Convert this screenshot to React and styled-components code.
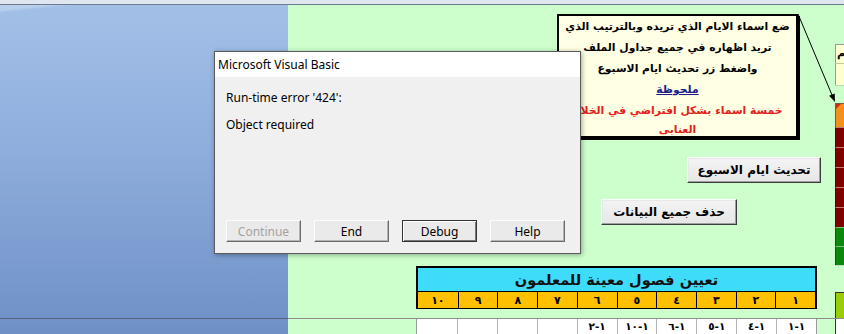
import React from 'react'
import styled, { createGlobalStyle } from 'styled-components'

const GlobalStyle = createGlobalStyle`
  html, body {
    margin: 0;
    padding: 0;
  }
  body {
    width: 844px;
    height: 334px;
    overflow: hidden;
    background: #ccffcc;
  }
`

const Screen = styled.div`
  position: relative;
  width: 844px;
  height: 334px;
  display: flex;
  flex-direction: column;
  overflow: hidden;
`

const TopStrip = styled.div`
  height: 4px;
  background: #dfe6ef;
  border-bottom: 1px solid #6b7a8d;
`

const Body = styled.div`
  flex: 1;
  display: flex;
`

const SidePanel = styled.div`
  width: 288px;
  background:
    linear-gradient(174deg, rgba(255, 255, 255, 0.25) 0 5px, rgba(255, 255, 255, 0) 8px) 0 0 / 100px 20px no-repeat,
    linear-gradient(180deg, #a2c0e7 0%, #8eaddc 45%, #6e90c6 100%);
`

const PanelRule = styled.div`
  margin-top: 313px;
  height: 1px;
  background: #56657c;
`

const Sheet = styled.div`
  flex: 1;
  display: flex;
  flex-direction: column;
  background: #ccffcc;
  font-family: "DejaVu Sans", sans-serif;
`

const SheetUpper = styled.div`
  height: 313px;
  display: flex;
`

const Canvas = styled.div`
  width: 547px;
  display: flex;
  flex-direction: column;
  align-items: flex-start;
`

const NoteBox = styled.div`
  margin: 9px 0 0 269px;
  width: 241px;
  height: 124px;
  box-sizing: border-box;
  border: 2px solid #000;
  box-shadow: 2px 2px 0 #000;
  background: #ffffe3;
  direction: rtl;
  text-align: center;
  font-weight: bold;
  font-size: 10.8px;
`

const NoteLine = styled.div`
  color: ${p => p.$color || '#000'};
  white-space: nowrap;
  text-decoration: ${p => (p.$underline ? 'underline' : 'none')};
  line-height: ${p => p.$lh || 21}px;
`

const SheetButton = styled.div`
  margin: ${p => p.$top}px 0 0 ${p => p.$left}px;
  width: ${p => p.$width}px;
  height: 26px;
  box-sizing: border-box;
  display: flex;
  align-items: center;
  justify-content: center;
  direction: rtl;
  font-weight: bold;
  font-size: 12px;
  color: #000;
  background: linear-gradient(180deg, #f4f4f4, #e6e6e6);
  border: 1px solid;
  border-color: #ffffff #3c3c3c #3c3c3c #ffffff;
  box-shadow: inset -1px -1px 0 #a0a0a0, inset 1px 1px 0 #e8e8e8;
`

const TableBlock = styled.div`
  margin: 41px 0 0 128px;
  width: 401px;
  box-sizing: border-box;
  border: 2px solid #000;
  border-bottom-width: 1px;
  direction: rtl;
`

const TableTitle = styled.div`
  height: 23px;
  background: #3fdcf9;
  border-bottom: 1px solid #000;
  display: flex;
  align-items: center;
  justify-content: center;
  font-weight: bold;
  font-size: 14.5px;
  color: #111;
`

const NumberRow = styled.div`
  height: 16px;
  display: grid;
  grid-template-columns: repeat(10, 1fr);
  background: #ffc000;
`

const NumberCell = styled.div`
  display: flex;
  align-items: center;
  justify-content: center;
  font-weight: bold;
  font-size: 11px;
  border-left: ${p => (p.$last ? 'none' : '1px solid #000')};
`

const RightColumn = styled.div`
  width: 9px;
  display: flex;
  flex-direction: column;
  overflow: hidden;
`

const ColumnCell = styled.div`
  position: relative;
  height: ${p => p.$h}px;
  box-sizing: border-box;
  background: ${p => p.$bg};
  border-top: ${p => (p.$line ? `1px solid ${p.$line}` : 'none')};
  border-left: ${p => (p.$edge ? `1px solid ${p.$edge}` : 'none')};
  font-size: 11px;
  font-weight: bold;
  line-height: 17px;
  padding-left: 1px;
  white-space: nowrap;
  color: #000;
`

const CommentMark = styled.span`
  position: absolute;
  left: 0;
  top: 0;
  width: 0;
  height: 0;
  border-top: 5px solid #d42a10;
  border-right: 5px solid transparent;
`

const SheetBottom = styled.div`
  height: 16px;
  box-sizing: border-box;
  display: flex;
  border-top: 1px solid #8f8f8f;
`

const Spacer = styled.div`
  width: ${p => p.$w}px;
  background: ${p => p.$bg || '#ccffcc'};
  border-left: ${p => (p.$edge ? `1px solid ${p.$edge}` : 'none')};
  box-sizing: border-box;
`

const DataRow = styled.div`
  width: 401px;
  display: grid;
  grid-template-columns: repeat(10, 1fr);
  direction: rtl;
  background: #fff;
  border-left: 1px solid #9a9a9a;
  border-right: 1px solid #9a9a9a;
  box-sizing: border-box;
`

const DataCell = styled.div`
  border-left: ${p => (p.$last ? 'none' : '1px solid #b5b5b5')};
  display: flex;
  align-items: flex-start;
  justify-content: center;
  font-size: 10.5px;
  font-weight: bold;
  line-height: 14px;
  color: #000;
`

const DataText = styled.span`
  direction: ltr;
  unicode-bidi: bidi-override;
`

const Arrow = styled.svg`
  position: absolute;
  left: 790px;
  top: 10px;
`

const Dialog = styled.div`
  position: absolute;
  left: 214px;
  top: 51px;
  width: 367px;
  height: 203px;
  box-sizing: border-box;
  border: 1px solid #5b5b5b;
  background: #f0f0f0;
  box-shadow: 1px 1px 5px rgba(0, 0, 0, 0.35);
  display: flex;
  flex-direction: column;
  font-family: "Noto Sans", "Open Sans", sans-serif;
  font-size: 12px;
  color: #000;
`

const DialogTitle = styled.div`
  height: 25px;
  background: #fff;
  padding-left: 3px;
  display: flex;
  align-items: center;
`

const DialogBody = styled.div`
  flex: 1;
  padding: 13px 11px 11px;
  display: flex;
  flex-direction: column;
`

const Message = styled.div`
  line-height: 16px;
  margin-bottom: 11px;
`

const ButtonRow = styled.div`
  margin-top: auto;
  display: flex;
  gap: 13px;
`

const DialogButton = styled.div`
  width: 75px;
  height: 22px;
  box-sizing: border-box;
  display: flex;
  align-items: center;
  justify-content: center;
  background: #eaeaea;
  color: ${p => (p.$disabled ? '#a3a3a3' : '#000')};
  border: 1px solid;
  border-color: ${p => (p.$default ? '#333 #333 #333 #333' : '#fdfdfd #6a6a6a #6a6a6a #fdfdfd')};
  box-shadow: ${p =>
    p.$default
      ? 'inset 1px 1px 0 #fff, inset -1px -1px 0 #777'
      : 'inset -1px -1px 0 #b4b4b4'};
`

const columnCells = [
  { h: 39, bg: '#ccffcc' },
  { h: 19, bg: '#ffffd0', line: '#9a9a9a', edge: '#9a9a9a', text: 'م' },
  { h: 22, bg: '#ffffd0', line: '#c8c8a0', edge: '#9a9a9a' },
  { h: 18, bg: '#ccffcc', line: '#b9d9b9' },
  { h: 24, bg: '#f5901f', line: '#7a5a3a', edge: '#7a5a3a', mark: true },
  { h: 20, bg: '#800000', line: '#c07a7a', edge: '#5a0000' },
  { h: 20, bg: '#800000', line: '#c07a7a', edge: '#5a0000' },
  { h: 20, bg: '#800000', line: '#c07a7a', edge: '#5a0000' },
  { h: 20, bg: '#800000', line: '#c07a7a', edge: '#5a0000' },
  { h: 20, bg: '#800000', line: '#c07a7a', edge: '#5a0000' },
  { h: 19, bg: '#0c880c', line: '#7fbf7f', edge: '#0a5a0a' },
  { h: 19, bg: '#0c880c', line: '#7fbf7f', edge: '#0a5a0a' },
  { h: 27, bg: '#ccffcc', line: '#b9d9b9' },
  { h: 26, bg: '#9acc0a', line: '#333', edge: '#333' },
]

const headerNumbers = ['١', '٢', '٣', '٤', '٥', '٦', '٧', '٨', '٩', '١٠']
// written in visual (left to right) order
const rowValues = ['١-١', '٤-١', '٥-١', '٦-١', '١٠-١', '٢-١', '', '', '', '']

const App = () => {
  return (
    <Screen>
      <GlobalStyle />
      <TopStrip />
      <Body>
        <SidePanel>
          <PanelRule />
        </SidePanel>
        <Sheet>
          <SheetUpper>
            <Canvas>
              <NoteBox>
                <NoteLine>ضع اسماء الايام الذي تريده وبالترتيب الذي</NoteLine>
                <NoteLine>تريد اظهاره في جميع جداول الملف</NoteLine>
                <NoteLine>واضغط  زر تحديث ايام الاسبوع</NoteLine>
                <NoteLine $color="#1c1c8a" $underline>
                  ملحوظة
                </NoteLine>
                <NoteLine $color="#e3201b">خمسة اسماء بشكل افتراضي في الخلايا</NoteLine>
                <NoteLine $color="#e3201b" $lh={18}>
                  العنابى
                </NoteLine>
              </NoteBox>
              <SheetButton $top={19} $left={399} $width={134}>
                تحديث ايام الاسبوع
              </SheetButton>
              <SheetButton $top={16} $left={313} $width={136}>
                حذف جميع البيانات
              </SheetButton>
              <TableBlock>
                <TableTitle>تعيين فصول معينة للمعلمون</TableTitle>
                <NumberRow>
                  {headerNumbers.map((n, i) => (
                    <NumberCell key={n} $last={i === headerNumbers.length - 1}>
                      {n}
                    </NumberCell>
                  ))}
                </NumberRow>
              </TableBlock>
            </Canvas>
            <RightColumn>
              {columnCells.map((c, i) => (
                <ColumnCell key={i} $h={c.h} $bg={c.bg} $line={c.line} $edge={c.edge}>
                  {c.mark && <CommentMark />}
                  {c.text}
                </ColumnCell>
              ))}
            </RightColumn>
          </SheetUpper>
          <SheetBottom>
            <Spacer $w={128} />
            <DataRow>
              {rowValues.map((v, i) => (
                <DataCell key={i} $last={i === rowValues.length - 1}>
                  <DataText>{v}</DataText>
                </DataCell>
              ))}
            </DataRow>
            <Spacer $w={18} />
            <Spacer $w={9} $bg="#fff" $edge="#333" />
          </SheetBottom>
        </Sheet>
      </Body>

      <Arrow width="54" height="100" viewBox="0 0 54 100">
        <line x1="8" y1="4" x2="42" y2="85" stroke="#000" strokeWidth="1" />
        <polygon points="45,92 44.7,83.5 39.1,85.8" fill="#000" />
      </Arrow>

      <Dialog>
        <DialogTitle>Microsoft Visual Basic</DialogTitle>
        <DialogBody>
          <Message>Run-time error '424':</Message>
          <Message>Object required</Message>
          <ButtonRow>
            <DialogButton $disabled>Continue</DialogButton>
            <DialogButton>End</DialogButton>
            <DialogButton $default>Debug</DialogButton>
            <DialogButton>Help</DialogButton>
          </ButtonRow>
        </DialogBody>
      </Dialog>
    </Screen>
  )
}

export default App
